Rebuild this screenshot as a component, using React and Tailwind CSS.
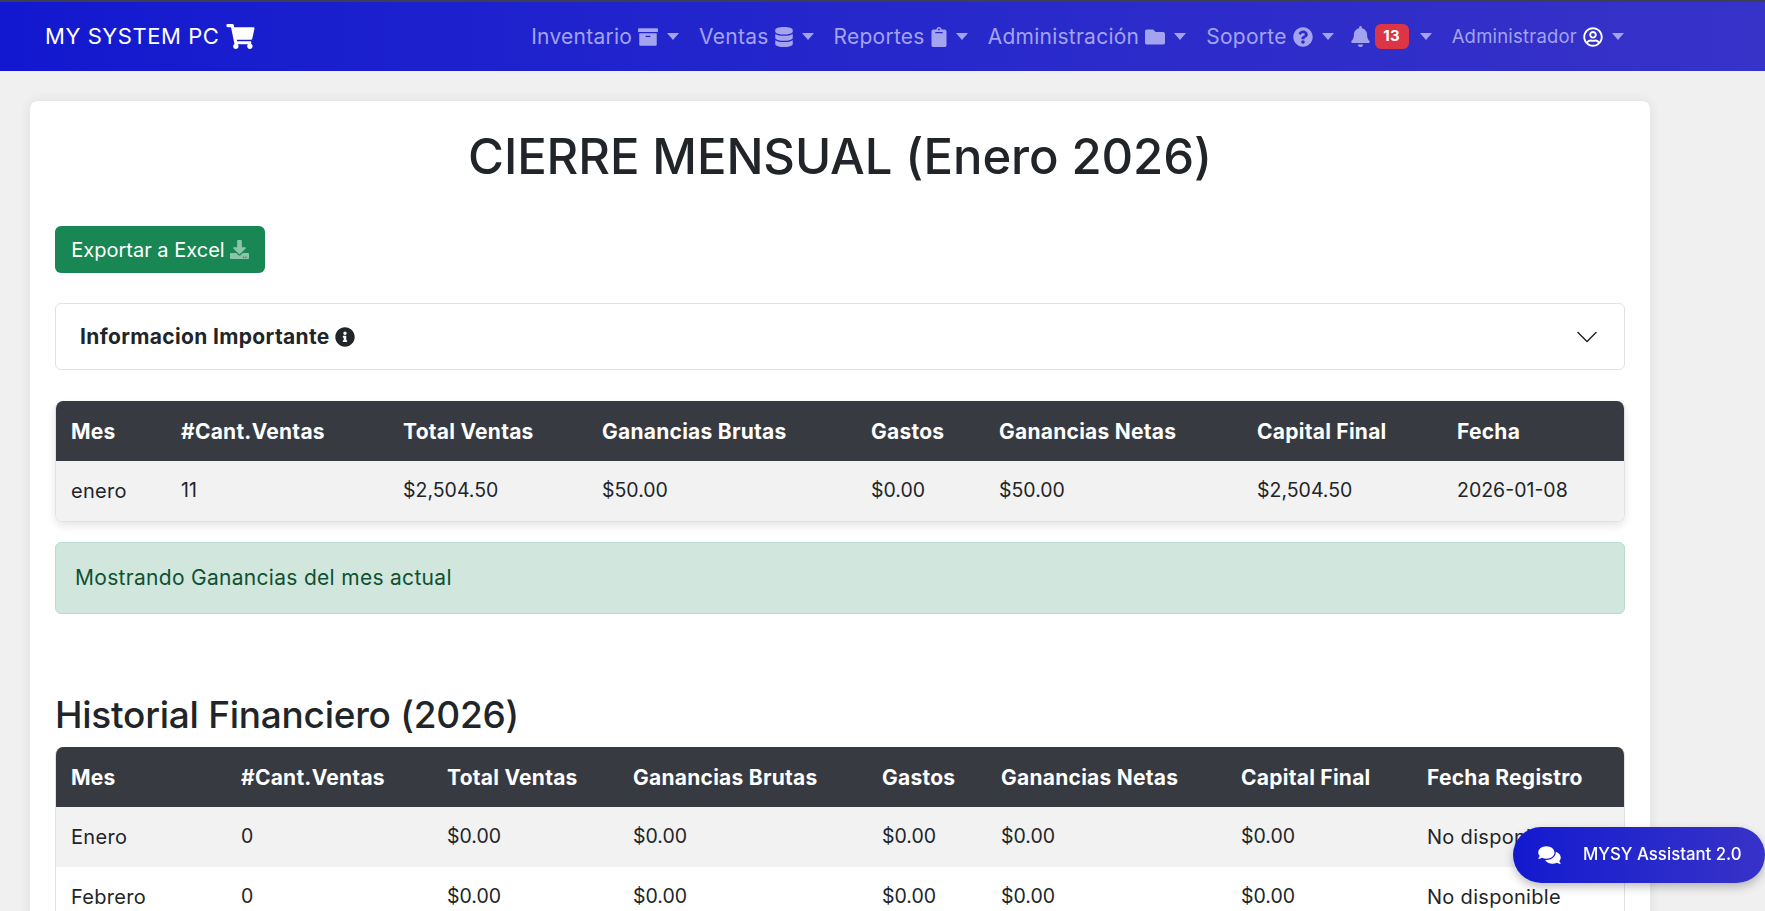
import React from 'react';
import {
  FaShoppingCart, FaArchive, FaDatabase, FaClipboard, FaFolder, FaQuestionCircle,
  FaBell, FaRegUserCircle, FaDownload, FaInfoCircle, FaComments,
} from 'react-icons/fa';

const navItems = [
  { label: 'Inventario', icon: FaArchive, iconClass: 'w-5 h-5' },
  { label: 'Ventas', icon: FaDatabase, iconClass: 'w-[18px] h-5' },
  { label: 'Reportes', icon: FaClipboard, iconClass: 'w-4 h-5' },
  { label: 'Administración', icon: FaFolder, iconClass: 'w-5 h-5' },
  { label: 'Soporte', icon: FaQuestionCircle, iconClass: 'w-5 h-5' },
];

const resumen = {
  cols: ['w-[110px]', 'w-[222px]', 'w-[199px]', 'w-[269px]', 'w-[128px]', 'w-[258px]', 'w-[200px]', 'w-[184px]'],
  head: ['Mes', '#Cant.Ventas', 'Total Ventas', 'Ganancias Brutas', 'Gastos', 'Ganancias Netas', 'Capital Final', 'Fecha'],
  rows: [['enero', '11', '$2,504.50', '$50.00', '$0.00', '$50.00', '$2,504.50', '2026-01-08']],
};

const historial = {
  cols: ['w-[170px]', 'w-[206px]', 'w-[186px]', 'w-[249px]', 'w-[119px]', 'w-[240px]', 'w-[186px]', 'w-[214px]'],
  head: ['Mes', '#Cant.Ventas', 'Total Ventas', 'Ganancias Brutas', 'Gastos', 'Ganancias Netas', 'Capital Final', 'Fecha Registro'],
  rows: [
    ['Enero', '0', '$0.00', '$0.00', '$0.00', '$0.00', '$0.00', 'No disponible'],
    ['Febrero', '0', '$0.00', '$0.00', '$0.00', '$0.00', '$0.00', 'No disponible'],
  ],
};

function Caret({ className = 'ml-[9px]' }) {
  return <span className={`${className} w-0 h-0 border-t-[7px] border-x-[6px] border-x-transparent border-t-[#a3a3ef]`} />;
}

function DataTable({ data, shadow }) {
  return (
    <div className={`rounded-lg overflow-hidden border border-[#dee2e6] border-t-0 ${shadow ? 'shadow-[0_4px_8px_rgba(0,0,0,0.1)]' : ''}`}>
      <table className="w-full table-fixed border-collapse text-[#212529]">
        <colgroup>
          {data.cols.map((c, i) => <col key={i} className={c} />)}
        </colgroup>
        <thead>
          <tr className="bg-[#373a40] text-white h-[60px]">
            {data.head.map((h) => (
              <th key={h} className="pl-[15px] pr-0 pt-[2px] text-left text-[21px] font-bold tracking-[0.25px] whitespace-nowrap">{h}</th>
            ))}
          </tr>
        </thead>
        <tbody>
          {data.rows.map((row, i) => (
            <tr key={i} className={`h-[60px] ${i % 2 === 0 ? 'bg-[#f2f2f2]' : 'bg-white'}`}>
              {row.map((cell, j) => (
                <td key={j} className={`pl-[15px] pr-0 whitespace-nowrap ${/^[\d$]/.test(cell) ? 'text-[19.5px]' : 'text-[20px] tracking-[0.3px]'}`}>{cell}</td>
              ))}
            </tr>
          ))}
        </tbody>
      </table>
    </div>
  );
}

export default function App() {
  return (
    <div className="h-screen overflow-hidden bg-[#f0f0f0] font-['Inter','Liberation_Sans',sans-serif] text-[#212529]">
      <nav className="h-[71px] border-t-2 border-[#3a3f55] bg-gradient-to-r from-[#1218cf] to-[#3732c8] flex items-center pl-[45px] pr-[141px]">
        <a className="flex items-center gap-[7px] text-[22px] tracking-[0.55px] text-white">
          MY SYSTEM PC
          <FaShoppingCart className="w-[29px] h-[25px]" />
        </a>
        <ul className="ml-auto flex items-center gap-5 text-[21px] tracking-[0.25px] text-[#a3a3ef]">
          {navItems.map(({ label, icon: Icon, iconClass }) => (
            <li key={label} className="flex items-center">
              <span>{label}</span>
              <Icon className={`ml-[6px] ${iconClass}`} />
              <Caret />
            </li>
          ))}
          <li className="-ml-[3px] flex items-center">
            <FaBell className="w-[19px] h-[21px]" />
            <span className="ml-[5px] w-[34px] h-[25px] rounded-md bg-[#dc3545] text-white text-[15px] font-bold flex items-center justify-center">13</span>
            <Caret className="ml-[11px]" />
          </li>
          <li className="flex items-center text-[18.5px] tracking-[0.2px]">
            <span>Administrador</span>
            <FaRegUserCircle className="ml-[6px] w-5 h-5 text-white" />
            <Caret />
          </li>
        </ul>
      </nav>

      <main className="w-[1620px] ml-[30px] mt-[30px] bg-white rounded-lg shadow-[0_0_12px_rgba(0,0,0,0.08)] px-[25px] pt-[20px] pb-6">
        <h1 className="text-[49px] font-medium tracking-[-0.1px] leading-[72px] text-center">CIERRE MENSUAL (Enero 2026)</h1>

        <button className="mt-[33px] h-[47px] w-[210px] rounded-md bg-[#198754] text-white text-[20px] flex items-center justify-center gap-[5px]">
          Exportar a Excel
          <FaDownload className="w-[19px] h-[19px] text-[#8cc3a9]" />
        </button>

        <div className="mt-[30px] h-[67px] border border-[#dee2e6] rounded-md flex items-center justify-between pl-[24px] pr-[25px]">
          <div className="flex items-center gap-[5px] text-[21px] tracking-[0.35px] font-bold">
            Informacion Importante
            <FaInfoCircle className="w-5 h-5" />
          </div>
          <svg viewBox="0 0 16 16" fill="currentColor" className="w-6 h-6">
            <path fillRule="evenodd" d="M1.646 4.646a.5.5 0 0 1 .708 0L8 10.293l5.646-5.647a.5.5 0 0 1 .708.708l-6 6a.5.5 0 0 1-.708 0l-6-6a.5.5 0 0 1 0-.708z" />
          </svg>
        </div>

        <div className="mt-[31px]">
          <DataTable data={resumen} shadow />
        </div>

        <div className="mt-[20px] h-[72px] border border-[#badbcc] bg-[#d1e7dd] text-[#0f5132] rounded-md flex items-center pl-[19px] text-[21px] tracking-[0.3px]">
          Mostrando Ganancias del mes actual
        </div>

        <h2 className="mt-[69px] text-[37px] font-medium tracking-[-0.25px] leading-[64px]">Historial Financiero (2026)</h2>

        <DataTable data={historial} />
      </main>

      <button className="fixed right-0 top-[827px] w-[252px] h-[56px] rounded-full bg-gradient-to-r from-[#1218cf] to-[#3732c8] text-white text-[16.8px] font-medium flex items-center pl-[24px] gap-[21px] shadow-[0_4px_10px_rgba(0,0,0,0.25)]">
        <FaComments className="w-[25px] h-5" />
        MYSY Assistant 2.0
      </button>
    </div>
  );
}
